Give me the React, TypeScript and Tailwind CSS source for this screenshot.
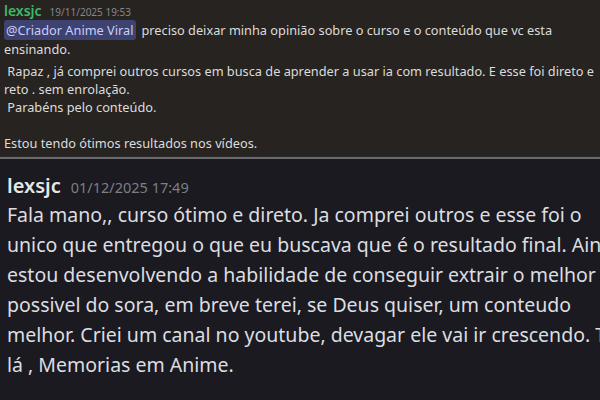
export default function App() {
  const top = 'font-["Noto_Sans","Open_Sans",sans-serif]'
  const lines = [
    'Fala mano,, curso ótimo e direto. Ja comprei outros e esse foi o',
    'unico que entregou o que eu buscava que é o resultado final. Ainda',
    'estou desenvolvendo a habilidade de conseguir extrair o melhor',
    'possivel do sora, em breve terei, se Deus quiser, um conteudo',
    'melhor. Criei um canal no youtube, devagar ele vai ir crescendo. Tá',
    'lá , Memorias em Anime.',
  ]
  return (
    <div className="w-[600px] h-[400px] overflow-hidden flex flex-col bg-[#1b1a20]">
      {/* first comment */}
      <div className={`h-[156px] shrink-0 bg-[#272320] px-1 pt-[2px] text-[12.75px] text-[#dcdcdc] ${top}`}>
        <div className="flex items-baseline gap-2 leading-[17px]">
          <span className="text-[14px] font-semibold text-[#3fb96a]">lexsjc</span>
          <span className="text-[10px] text-[#85878e]">19/11/2025 19:53</span>
        </div>
        <div className="leading-[19px] whitespace-nowrap">
          <span className="bg-[#3d4270] text-[#c9cdfb] px-[2px] py-[1px] rounded-[3px]">@Criador Anime Viral</span>
          <span className="ml-[6px]">preciso deixar minha opinião sobre o curso e o conteúdo que vc esta</span>
        </div>
        <div className="leading-[19px]">ensinando.</div>
        <div className="mt-[3px] leading-[18px] whitespace-nowrap">&nbsp;Rapaz , já comprei outros cursos em busca de aprender a usar ia com resultado. E esse foi direto e</div>
        <div className="leading-[18px]">reto . sem enrolação.</div>
        <div className="leading-[18px]">&nbsp;Parabéns pelo conteúdo.</div>
        <div className="leading-[18px]">&nbsp;</div>
        <div className="leading-[18px]">Estou tendo ótimos resultados nos vídeos.</div>
      </div>
      <div className="h-px bg-[#2a2a2c] shrink-0" />
      <div className="h-[2px] bg-[#6b6b6e] shrink-0" />
      {/* second comment */}
      <div className={`flex-1 px-[7px] pt-[14px] text-[#dbdee1] ${top}`}>
        <div className="flex items-baseline gap-[10px] leading-[26px]">
          <span className="text-[20px] font-semibold text-[#e6e6e8]">lexsjc</span>
          <span className="text-[14.5px] text-[#7d7f86]">01/12/2025 17:49</span>
        </div>
        {lines.map((l, i) => (
          <div key={i} className="text-[19.5px] leading-[30px] whitespace-nowrap">{l}</div>
        ))}
      </div>
    </div>
  )
}
